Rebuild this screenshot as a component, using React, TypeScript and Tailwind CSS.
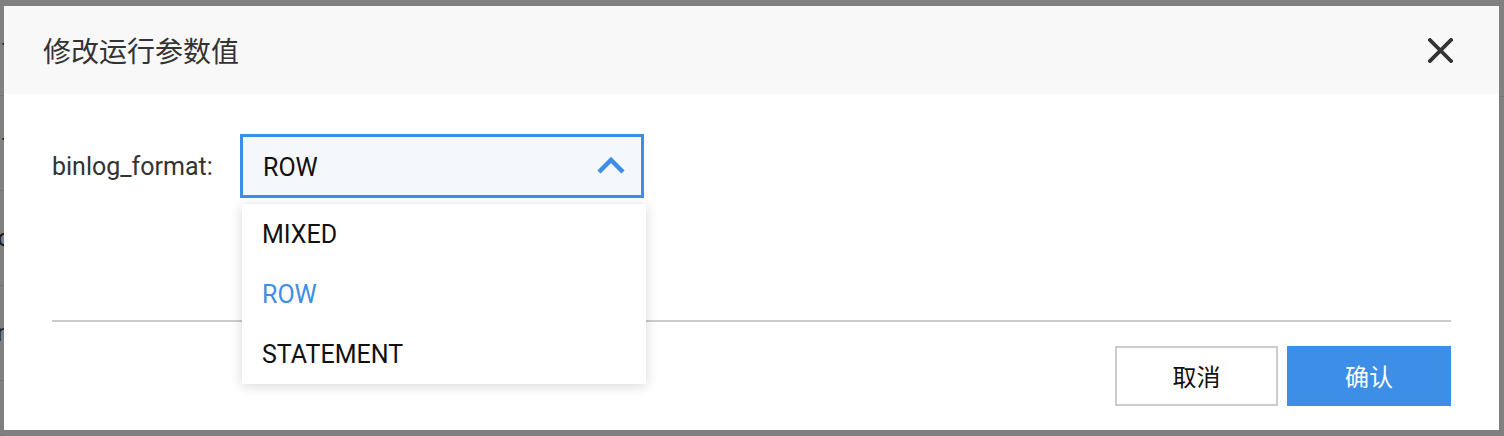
const stripRows = [
  { text: "t", h: "h-[96px]" },
  { text: "t", h: "h-[95px]" },
  { text: "c", h: "h-[95px]" },
  { text: "n", h: "h-[95px]" },
  { text: "", h: "h-[55px]" },
]

const options = ["MIXED", "ROW", "STATEMENT"]

const App = () => {
  return (
    <div className="flex w-[1504px] h-[436px] bg-[#808080] overflow-hidden font-['Roboto','Noto_Sans_CJK_SC',sans-serif]">
      {/* page behind the overlay, only a sliver shows */}
      <div className="w-[4px] flex flex-col overflow-hidden">
        {stripRows.map((r, i) => (
          <div key={i} className={`${r.h} shrink-0 flex items-center justify-end border-b border-[#747474] text-[24px] text-[#1c1c1c]`}>
            <span className="mr-[-6px]">{r.text}</span>
          </div>
        ))}
      </div>

      <div className="mt-[6px] w-[1495px] h-[424px] bg-white flex flex-col">
        <div className="h-[88px] bg-[#f8f8f8] flex items-center justify-between pl-[39px] pr-[46px]">
          <span className="text-[28px] text-[#333] font-['Noto_Sans_CJK_SC',sans-serif]">修改运行参数值</span>
          <svg width="25" height="25" viewBox="0 0 25 25">
            <path d="M2 2 L23 23 M23 2 L2 23" stroke="#333" strokeWidth="3.8" strokeLinecap="square" fill="none" />
          </svg>
        </div>

        <div className="px-[48px] pt-[40px] flex flex-col">
          <div className="flex items-center">
            <label className="w-[188px] text-[25px] text-[#333] leading-none">binlog_format:</label>
            <div className="relative w-[404px]">
              <div className="h-[64px] border-[3px] border-[#3d8ee6] bg-[#f4f7fc] flex items-center justify-between pl-[20px] pr-[14px]">
                <span className="text-[25px] text-[#111] pt-[4px]">ROW</span>
                <svg width="32" height="20" viewBox="0 0 32 20">
                  <path d="M4 16 L16 4 L28 16" stroke="#3d8ee6" strokeWidth="4.5" fill="none" />
                </svg>
              </div>
              <div className="absolute z-10 top-[70px] left-[2px] w-[404px] bg-white shadow-[0_2px_12px_rgba(0,0,0,0.16)]">
                {options.map((o) => (
                  <div key={o} className={`h-[60px] flex items-center pl-[20px] pt-[2px] text-[25px] ${o === "ROW" ? "text-[#3d8ee6]" : "text-[#111]"}`}>
                    {o}
                  </div>
                ))}
              </div>
            </div>
          </div>

          <div className="mt-[122px] h-[2px] bg-[#cccccc]" />

          <div className="mt-[24px] flex justify-end gap-[9px]">
            <button className="w-[163px] h-[60px] border-2 border-[#cccccc] bg-white text-[24px] text-[#111] font-['Noto_Sans_CJK_SC',sans-serif]">
              取消
            </button>
            <button className="w-[164px] h-[60px] bg-[#3d8ee6] text-[24px] text-white font-['Noto_Sans_CJK_SC',sans-serif]">
              确认
            </button>
          </div>
        </div>
      </div>

      <div className="w-[5px] flex flex-col">
        <div className="h-[97px] border-b border-[#747474]" />
      </div>
    </div>
  )
}

export default App
